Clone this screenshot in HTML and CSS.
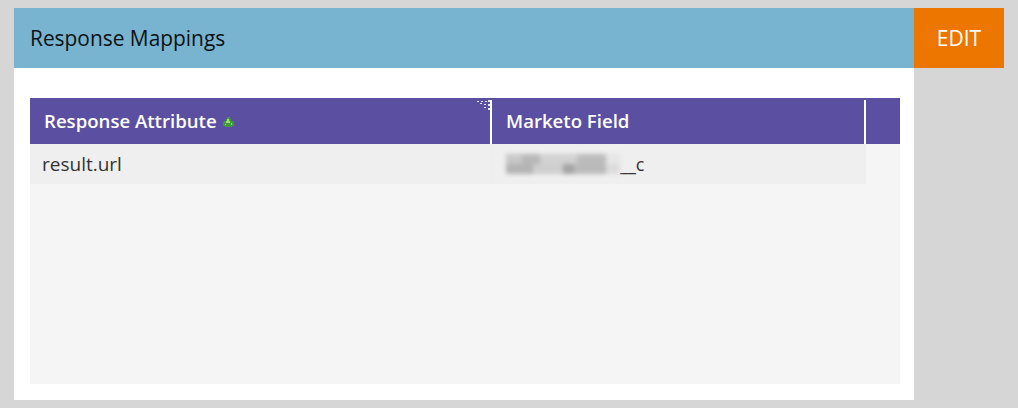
FILE: index.html
```html
<!DOCTYPE html>
<html lang="en">
<head>
  <meta charset="UTF-8" />
  <title>Response Mappings</title>
  <link rel="stylesheet" href="styles.css">
</head>
<body>

  <div class="panel-wrap">
    <div class="panel">
      <div class="panel-header">
        <h2>Response Mappings</h2>
      </div>
      <div class="panel-body">
        <div class="grid">
          <div class="grid-head">
            <div class="head-cell head-first">
              <span>Response Attribute</span>
              <svg class="sort-icon" width="11" height="10" viewBox="0 0 11 10">
                <path d="M4 0h3v2h1v2h2v1h1v4H9v1H2V9H0V5h1V4h2V2h1z" fill="#3f9c35"/>
                <path d="M4 2h2v2h1v2H3V4h1zM8 6h1v2H8zM2 7h1v1H2z" fill="#9bdc7c"/>
              </svg>
              <svg class="resize-dots" width="13" height="12" viewBox="0 0 13 12">
                <path d="M0 1h2v1H0zM4 1h2v1H4zM8 1h2v1H8zM11 0h2v2h-2zM3 3h2v1H3zM7 4h2v1H7zM11 4h2v2h-2zM7 7h2v1H7zM11 8h2v2h-2z" fill="#e6e3f2"/>
              </svg>
            </div>
            <div class="head-cell head-second">
              <span>Marketo Field</span>
            </div>
            <div class="head-rest"></div>
          </div>
          <div class="grid-row">
            <div class="cell cell-first">result.url</div>
            <div class="cell cell-second">
              <span class="blurred"></span><span class="suffix">__c</span>
            </div>
          </div>
        </div>
      </div>
    </div>
    <button class="edit-btn">EDIT</button>
  </div>

</body>
</html>
```

FILE: styles.css
```css
body {
  margin: 0;
  padding: 8px 14px;
  background-color: #d6d6d6;
  font-family: 'Open Sans', sans-serif;
  color: #333;
}

.panel-wrap {
  display: flex;
  align-items: flex-start;
}

.panel {
  width: 900px;
  height: 392px;
  background: #fff;
}

.panel-header {
  height: 60px;
  display: flex;
  align-items: center;
  padding-left: 16px;
  background-color: #78b4cf;
}

.panel-header h2 {
  margin: 0;
  font-size: 20.9px;
  font-weight: 400;
  color: #0d1215;
}

.panel-body {
  padding: 30px 14px 16px 16px;
}

.grid {
  height: 286px;
  background: #f5f5f5;
}

.grid-head {
  display: flex;
  height: 46px;
  background-color: #5b4fa2;
  color: #fff;
  font-size: 18.6px;
  font-weight: 600;
}

.head-cell {
  position: relative;
  display: flex;
  align-items: center;
  box-sizing: border-box;
  padding-left: 14px;
  margin-top: 2px;
  padding-bottom: 4px;
}

.head-first {
  width: 462px;
  border-right: 2px solid #fff;
}

.head-second {
  width: 374px;
  padding-left: 14px;
  border-right: 2px solid #fff;
}

.sort-icon {
  margin-left: 6px;
  margin-top: 4px;
}

.resize-dots {
  position: absolute;
  top: 0;
  right: 0;
}

.grid-row {
  display: flex;
  width: 836px;
  height: 40px;
  background-color: #efefef;
  font-size: 19px;
}

.cell {
  display: flex;
  align-items: center;
  box-sizing: border-box;
}

.cell-first {
  width: 462px;
  padding-left: 12px;
  border-right: 1px solid #ececec;
}

.cell-second {
  padding-left: 14px;
}

.blurred {
  width: 114px;
  height: 24px;
  background:
    linear-gradient(90deg, #c8c8c8 0 14%, #b8b8b8 14% 30%, #d2d2d2 30% 62%, #bcbcbc 62% 88%, #e6e6e6 88%) 0 2px / 100% 10px no-repeat,
    linear-gradient(90deg, #b4b4b4 0 24%, #cecece 24% 50%, #a4a4a4 50% 60%, #bababa 60% 88%, #dcdcdc 88%) 0 12px / 100% 10px no-repeat;
  filter: blur(2px);
}

.suffix {
  font-size: 18px;
}

.edit-btn {
  width: 90px;
  height: 60px;
  padding: 0;
  border: none;
  background-color: #ec7600;
  color: #fff;
  font-family: inherit;
  font-size: 21px;
}
```
